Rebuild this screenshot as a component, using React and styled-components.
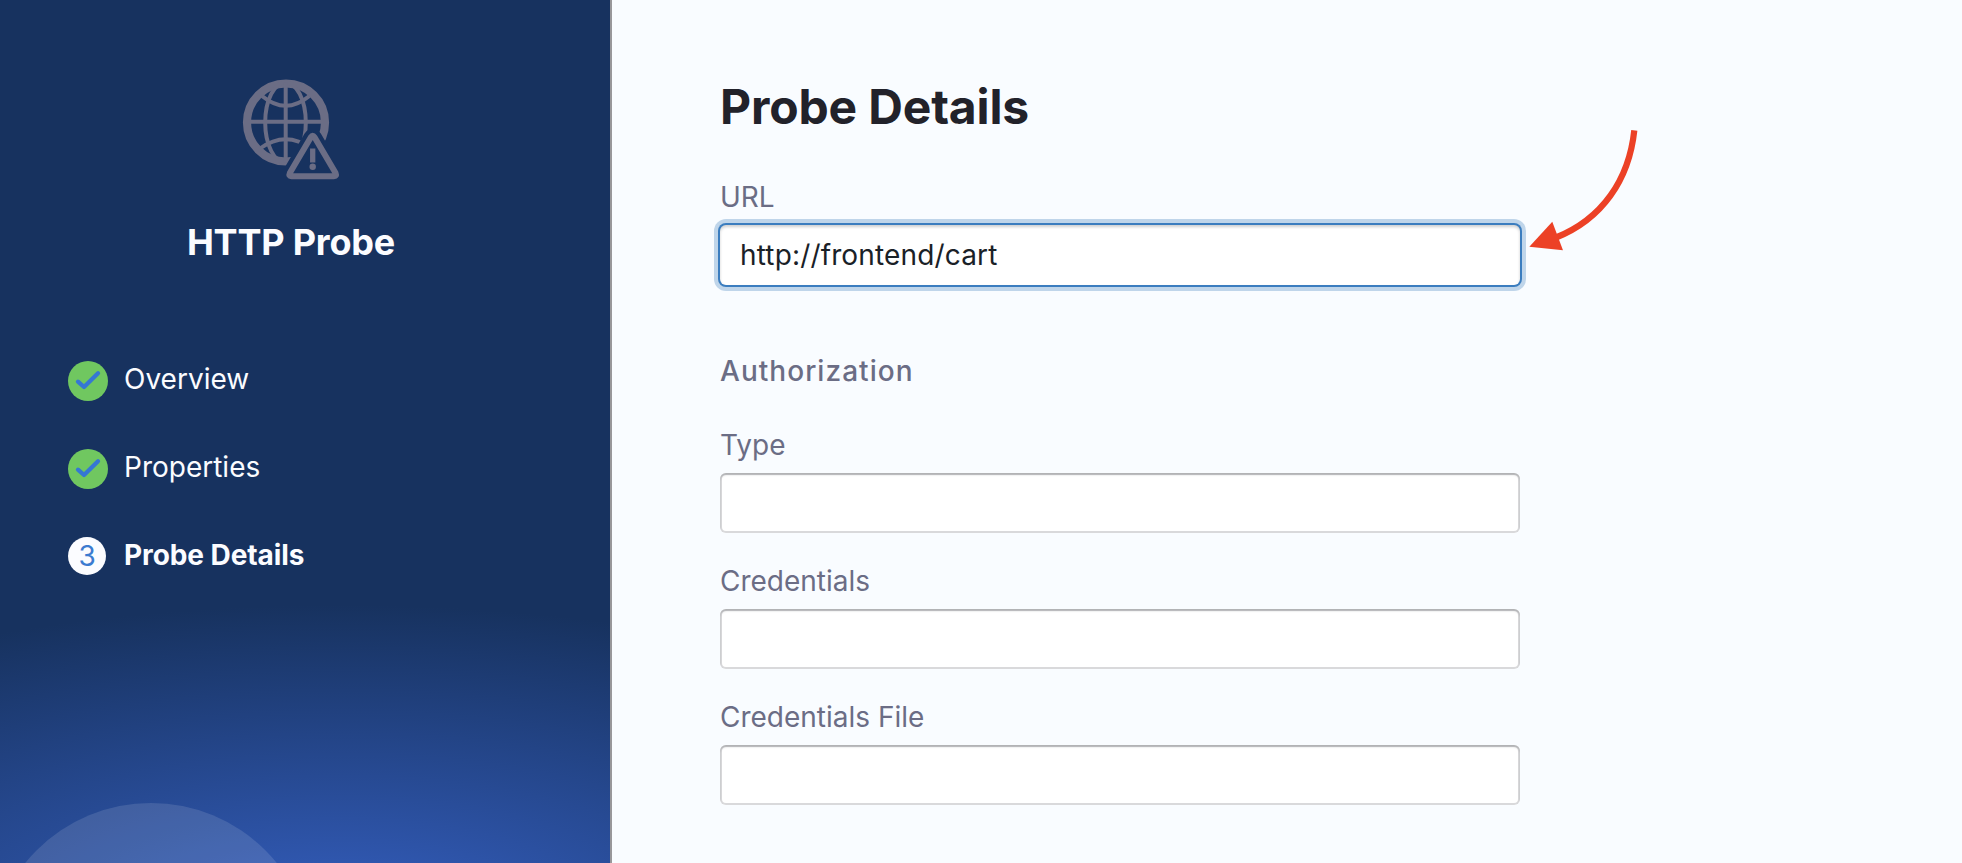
import React from "react";
import styled, { createGlobalStyle, css } from "styled-components";

const GlobalStyle = createGlobalStyle`
  *, *::before, *::after { box-sizing: border-box; }
  body {
    margin: 0;
    overflow: hidden;
    background: #f9fcff;
    font-family: Inter, "Liberation Sans", sans-serif;
  }
`;

const Page = styled.div`
  position: relative;
  display: flex;
  height: 863px;
  overflow: hidden;
`;

const Sidebar = styled.aside`
  position: relative;
  flex: none;
  width: 612px;
  padding: 76px 28px 0 0;
  border-right: 2px solid #98979a;
  overflow: hidden;
  background: radial-gradient(ellipse 830px 320px at 340px 925px, #3762c0 0%, #2f56ad 20%, #17325f 100%) #17325f;
`;

const Bubble = styled.div`
  position: absolute;
  left: -11px;
  top: 803px;
  width: 324px;
  height: 324px;
  border-radius: 50%;
  background: rgba(255, 255, 255, 0.12);
`;

const ProbeIcon = styled.svg`
  display: block;
  width: 102px;
  height: 106px;
  margin-left: 240px;
`;

const ProbeName = styled.h2`
  margin: 38px 0 0;
  text-align: center;
  font-size: 36px;
  line-height: 44px;
  font-weight: 700;
  letter-spacing: -0.2px;
  color: #fbfcff;
`;

const Steps = styled.ol`
  display: flex;
  flex-direction: column;
  gap: 48px;
  margin: 97px 0 0;
  padding: 0 0 0 68px;
  list-style: none;
`;

const Step = styled.li`
  display: flex;
  align-items: center;
  height: 40px;
  color: #fbfcff;
  font-size: 28px;
  font-weight: ${(p) => (p.$current ? 700 : 400)};
  letter-spacing: ${(p) => (p.$current ? "-0.08px" : "0")};
`;

const StepMark = styled.span`
  flex: none;
  display: flex;
  align-items: center;
  justify-content: center;
  width: ${(p) => (p.$done ? 40 : 38)}px;
  height: ${(p) => (p.$done ? 40 : 38)}px;
  margin-right: ${(p) => (p.$done ? 16 : 18)}px;
  margin-top: ${(p) => (p.$done ? 0 : -2)}px;
  border-radius: 50%;
  background: ${(p) => (p.$done ? "#70c760" : "#fbfcff")};
  color: #3b7bd0;
  font-weight: 400;
`;

const StepLabel = styled.span`
  margin-top: -4px;
`;

const Content = styled.main`
  flex: 1;
  padding: 78px 0 0 108px;
`;

const Title = styled.h1`
  margin: 0;
  font-size: 48px;
  line-height: 58px;
  font-weight: 700;
  letter-spacing: -0.15px;
  color: #22222a;
`;

const Field = styled.label`
  display: block;
  width: 800px;
  margin-top: ${(p) => p.$gap}px;
`;

const Caption = styled.span`
  display: block;
  height: 34px;
  margin-bottom: 11px;
  font-size: 28px;
  line-height: 34px;
  color: #6b6d85;
`;

const focused = css`
  box-shadow: 0 0 0 2px #3b7dbf, 0 0 0 6px #bfd5ea,
    inset 0 2px 3px rgba(16, 22, 26, 0.2);
`;

const TextInput = styled.input`
  display: block;
  width: 800px;
  height: 60px;
  padding: 0 20px;
  border: 0;
  border-radius: 6px;
  outline: 0;
  background: #fff;
  color: #1a2127;
  font: 400 28px/34px Inter, "Liberation Sans", sans-serif;
  letter-spacing: 0.15px;
  box-shadow: inset 0 2px 2px rgba(16, 22, 26, 0.2), inset 0 0 0 2px #d9d9db;
  ${(p) => p.$focused && focused}
`;

const GroupTitle = styled.h3`
  margin: 69px 0 0;
  font-size: 28px;
  line-height: 34px;
  font-weight: 500;
  letter-spacing: 1.03px;
  color: #6b6d85;
`;

const Pointer = styled.svg`
  position: absolute;
  left: 1520px;
  top: 120px;
  width: 130px;
  height: 140px;
`;

const TRIANGLE =
  "M311 136.5Q312.7 133.8 314.4 136.5L335.6 172.6Q337 175.8 334 175.8H291.4Q288.4 175.8 289.8 172.6Z";

function GlobeAlert() {
  return (
    <ProbeIcon viewBox="240 75.5 102 106" fill="none" stroke="#6b6d85">
      <mask id="cut" maskUnits="userSpaceOnUse" x="240" y="76" width="102" height="106">
        <rect x="240" y="76" width="102" height="106" fill="#fff" stroke="none" />
        <path d={TRIANGLE} fill="#000" stroke="#000" strokeWidth="14.5" strokeLinejoin="round" />
      </mask>
      <g mask="url(#cut)">
        <circle cx="286" cy="122" r="39" strokeWidth="8.2" />
        <g strokeWidth="4">
          <ellipse cx="285.5" cy="122" rx="20.3" ry="40" />
          <path d="M285.7 82V162M248 121.2H324" />
          <path d="M262 95.5Q285.7 115 309.4 95.5M260 148Q285.7 129.5 311.4 148" />
        </g>
      </g>
      <path d={TRIANGLE} strokeWidth="6" strokeLinejoin="round" />
      <path d="M312.7 148V162" strokeWidth="5.3" />
      <circle cx="312.7" cy="166.2" r="3.2" fill="#6b6d85" stroke="none" />
    </ProbeIcon>
  );
}

function Check() {
  return (
    <svg width="40" height="40" viewBox="0 0 40 40" fill="none">
      <path
        d="M10 20.7L16 26L30 12.3"
        stroke="#3577d4"
        strokeWidth="4.3"
        strokeLinecap="round"
        strokeLinejoin="round"
      />
    </svg>
  );
}

const steps = [
  { label: "Overview", done: true },
  { label: "Properties", done: true },
  { label: "Probe Details", done: false },
];

export default function App() {
  return (
    <Page>
      <GlobalStyle />
      <Sidebar>
        <Bubble />
        <GlobeAlert />
        <ProbeName>HTTP Probe</ProbeName>
        <Steps>
          {steps.map((s, i) => (
            <Step key={s.label} $current={!s.done}>
              <StepMark $done={s.done}>{s.done ? <Check /> : i + 1}</StepMark>
              <StepLabel>{s.label}</StepLabel>
            </Step>
          ))}
        </Steps>
      </Sidebar>
      <Content>
        <Title>Probe Details</Title>
        <Field $gap={44}>
          <Caption>URL</Caption>
          <TextInput $focused defaultValue="http://frontend/cart" />
        </Field>
        <GroupTitle>Authorization</GroupTitle>
        <Field $gap={40}>
          <Caption>Type</Caption>
          <TextInput />
        </Field>
        <Field $gap={31}>
          <Caption>Credentials</Caption>
          <TextInput />
        </Field>
        <Field $gap={31}>
          <Caption>Credentials File</Caption>
          <TextInput />
        </Field>
      </Content>
      <Pointer viewBox="1520 120 130 140">
        <path d="M1634.3 130.3C1629 180 1602 219 1556 237.5" fill="none" stroke="#ec4126" strokeWidth="6.2" />
        <path d="M1529.3 246.7L1552.3 221.7L1563 250.3Z" fill="#ec4126" />
      </Pointer>
    </Page>
  );
}
